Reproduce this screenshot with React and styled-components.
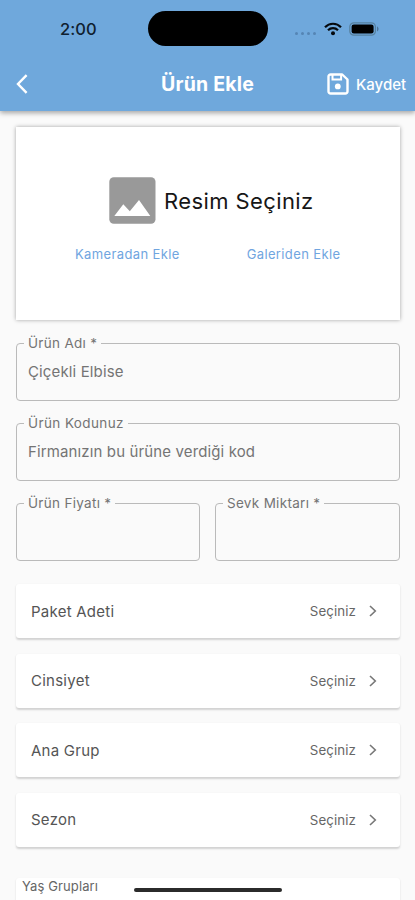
import React from 'react'
import styled, { createGlobalStyle } from 'styled-components'

const selections = ['Paket Adeti', 'Cinsiyet', 'Ana Grup', 'Sezon']

const WifiIcon = () => (
  <svg width='18' height='14' viewBox='0 0 18 14' fill='none' stroke='#05090d' strokeWidth='2.2'>
    <path d='M1 5.2C5.4 .6 12.6 .6 17 5.2' />
    <path d='M4 8.3C6.8 5.5 11.2 5.5 14 8.3' />
    <circle cx='9' cy='11.2' r='2' fill='#05090d' stroke='none' />
  </svg>
)

const BatteryIcon = () => (
  <svg width='31' height='14' viewBox='0 0 31 14'>
    <rect x='.8' y='.8' width='25.6' height='12.4' rx='4' fill='none' stroke='#56809f' strokeWidth='1.2' />
    <rect x='2.6' y='2.6' width='22' height='8.8' rx='2.2' fill='#000' />
    <path d='M28 4.6c2 .6 2 4.2 0 4.8z' fill='#4d7599' />
  </svg>
)

const BackIcon = () => (
  <svg width='12' height='20' viewBox='0 0 12 20' fill='none' stroke='#fff' strokeWidth='2.4'>
    <path d='M10.6 1.2L2 10l8.6 8.8' />
  </svg>
)

const SaveIcon = () => (
  <svg width='22' height='22' viewBox='0 0 22 22' fill='none' stroke='#fff' strokeWidth='2.4'>
    <path d='M3.6 1.5H15.2L20.5 6.5V18.4a2.1 2.1 0 0 1-2.1 2.1H3.6a2.1 2.1 0 0 1-2.1-2.1V3.600a2.1 2.1 0 0 1 2.1-2.1z' strokeLinejoin='round' />
    <path d='M5.500 2v4.400h8.600V2' strokeWidth='2' />
    <circle cx='10.800' cy='13.400' r='2.900' fill='#fff' stroke='none' />
  </svg>
)

const ImageIcon = () => (
  <svg width='47' height='47' viewBox='0 0 47 47'>
    <rect x='.3' y='.3' width='46.2' height='46.4' rx='4.5' fill='#999' />
    <path d='M5.300 39L14.300 27.200l6.500 7L30 23.100 41.300 39z' fill='#fff' />
  </svg>
)

const ChevronIcon = () => (
  <svg width='8' height='12' viewBox='0 0 8 12' fill='none' stroke='#777' strokeWidth='1.6'>
    <path d='M1 1l5.3 5L1 11' />
  </svg>
)

const App = () => (
  <>
    <GlobalStyle />
    <Screen>
      <Header>
        <StatusBar>
          <Time>2:00</Time>
          <Island />
          <StatusIcons>
            <Signal><i /><i /><i /><i /></Signal>
            <WifiIcon />
            <BatteryIcon />
          </StatusIcons>
        </StatusBar>
        <Toolbar>
          <BackButton aria-label='Geri'><BackIcon /></BackButton>
          <Title>Ürün Ekle</Title>
          <SaveButton><SaveIcon />Kaydet</SaveButton>
        </Toolbar>
      </Header>
      <Content>
        <PhotoCard>
          <PhotoTitle><ImageIcon /><span>Resim Seçiniz</span></PhotoTitle>
          <PhotoActions>
            <PhotoLink>Kameradan Ekle</PhotoLink>
            <PhotoLink>Galeriden Ekle</PhotoLink>
          </PhotoActions>
        </PhotoCard>
        <Fields>
          <Field>
            <Label>Ürün Adı *</Label>
            <Input aria-label='Ürün Adı' placeholder='Çiçekli Elbise' />
          </Field>
          <Field>
            <Label $spacing='.4px'>Ürün Kodunuz</Label>
            <Input aria-label='Ürün Kodunuz' placeholder='Firmanızın bu ürüne verdiği kod' />
          </Field>
          <FieldPair>
            <Field>
              <Label>Ürün Fiyatı *</Label>
              <Input aria-label='Ürün Fiyatı' />
            </Field>
            <Field>
              <Label>Sevk Miktarı *</Label>
              <Input aria-label='Sevk Miktarı' />
            </Field>
          </FieldPair>
        </Fields>
        <Selections>
          {selections.map(name => (
            <SelectRow key={name}>
              <RowName>{name}</RowName>
              <RowValue>Seçiniz</RowValue>
              <ChevronIcon />
            </SelectRow>
          ))}
        </Selections>
        <AgeGroups>Yaş Grupları</AgeGroups>
      </Content>
      <HomeIndicator />
    </Screen>
  </>
)

export default App

const GlobalStyle = createGlobalStyle`
  body {
    margin: 0;
    font-family: Inter, 'Liberation Sans', sans-serif;
  }

  * {
    box-sizing: border-box;
  }

  svg {
    display: block;
    flex: none;
  }
`

const Screen = styled.div`
  position: relative;
  width: 415px;
  height: 900px;
  overflow: hidden;
  background: #fafafa;
`

const Header = styled.header`
  position: relative;
  height: 111px;
  background: #6fa8dc;
  box-shadow: 0 2px 5px rgba(0, 0, 0, .35);
`

const StatusBar = styled.div`
  display: grid;
  grid-template-columns: 148px 120px 1fr;
  align-items: center;
  height: 57px;
`

const Time = styled.div`
  padding-left: 60px;
  color: #10202f;
  font-size: 16.5px;
  font-weight: 500;
  letter-spacing: .1px;
`

const Island = styled.div`
  height: 35px;
  border-radius: 18px;
  background: #000;
`

const StatusIcons = styled.div`
  display: flex;
  align-items: center;
  padding-left: 27px;

  svg + svg {
    margin-left: 7px;
  }
`

const Signal = styled.div`
  display: flex;
  gap: 3px;
  margin: 9px 8px 0 0;

  i {
    width: 3px;
    height: 3px;
    border-radius: 50%;
    background: #5585b4;
  }
`

const Toolbar = styled.div`
  display: grid;
  grid-template-columns: 100px 1fr 100px;
  align-items: center;
  height: 54px;
`

const BackButton = styled.button`
  justify-self: start;
  padding: 0 0 0 16px;
  border: 0;
  background: none;
`

const Title = styled.h1`
  margin: 0;
  color: #fff;
  font-size: 19.5px;
  font-weight: 700;
  letter-spacing: .2px;
  text-align: center;
`

const SaveButton = styled.button`
  display: flex;
  align-items: center;
  gap: 7px;
  padding: 0;
  margin-left: 12px;
  border: 0;
  background: none;
  color: #fff;
  font: 500 15px Inter, sans-serif;
`

const Content = styled.main`
  padding: 16px 15px 0 16px;
`

const PhotoCard = styled.section`
  height: 193px;
  padding-top: 50px;
  background: #fff;
  box-shadow: 0 0 4px rgba(0, 0, 0, .35);
`

const PhotoTitle = styled.div`
  display: flex;
  align-items: center;
  gap: 8px;
  padding-left: 93px;
  color: #161616;
  font-size: 22px;
  letter-spacing: .4px;
`

const PhotoActions = styled.div`
  display: flex;
  gap: 67px;
  margin-top: 22px;
  padding-left: 59px;
`

const PhotoLink = styled.a`
  color: #70a5df;
  font-size: 13px;
  letter-spacing: .37px;
  line-height: 17px;
  white-space: nowrap;
`

const Fields = styled.div`
  display: flex;
  flex-direction: column;
  gap: 14px;
  margin-top: 15px;
`

const Field = styled.fieldset`
  min-width: 0;
  height: 66px;
  margin: 0;
  padding: 0 8px 0 7px;
  border: 1px solid #bababa;
  border-radius: 4px;
`

const FieldPair = styled.div`
  display: grid;
  grid-template-columns: 184px 1fr;
  gap: 15px;
`

const Label = styled.legend`
  height: 17px;
  padding: 0 4px;
  color: #747474;
  font-size: 13.5px;
  letter-spacing: ${props => props.$spacing || '.3px'};
  line-height: 17px;
`

const Input = styled.input`
  width: 100%;
  height: 38px;
  padding: 0 4px;
  border: 0;
  background: none;
  font: 15px Inter, sans-serif;
  letter-spacing: .13px;
  outline: none;

  &::placeholder {
    color: #747474;
    opacity: 1;
  }
`

const Selections = styled.div`
  display: flex;
  flex-direction: column;
  gap: 15.6px;
  margin-top: 23px;
`

const SelectRow = styled.div`
  display: flex;
  align-items: center;
  height: 54px;
  padding: 0 23px 0 15px;
  border-radius: 3px;
  background: #fff;
  box-shadow: 0 1.5px 2px rgba(0, 0, 0, .16);
`

const RowName = styled.span`
  flex: 1;
  color: #555;
  font-size: 15px;
  letter-spacing: .25px;
`

const RowValue = styled.span`
  margin-right: 13px;
  color: #666;
  font-size: 13.3px;
  letter-spacing: .1px;
`

const AgeGroups = styled.section`
  height: 60px;
  margin-top: 31px;
  padding-left: 6px;
  border-radius: 3px;
  background: #fff;
  box-shadow: 0 1px 2px rgba(0, 0, 0, .14);
  color: #666;
  font-size: 13px;
  letter-spacing: .12px;
  line-height: 16px;
`

const HomeIndicator = styled.div`
  position: absolute;
  bottom: 8px;
  left: 134px;
  width: 148px;
  height: 4px;
  border-radius: 3px;
  background: #2b2b2b;
`
